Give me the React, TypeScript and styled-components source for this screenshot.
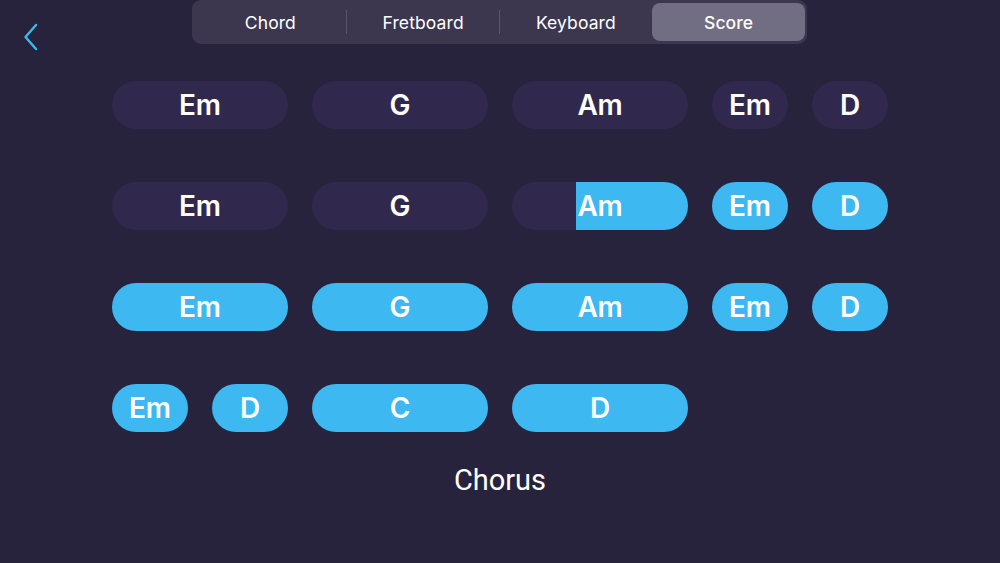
import React from "react";
import styled, { createGlobalStyle } from "styled-components";

const Global = createGlobalStyle`
  html, body { margin: 0; padding: 0; background: #28233d; }
  body { font-family: Inter, "Liberation Sans", Arial, sans-serif; }
  * { box-sizing: border-box; }
`;

const Screen = styled.div`
  width: 1000px;
  height: 563px;
  background: #28233d;
  position: relative;
  overflow: hidden;
  display: flex;
  flex-direction: column;
  align-items: center;
`;

const BackButton = styled.button`
  position: absolute;
  left: 18px;
  top: 20px;
  width: 26px;
  height: 34px;
  padding: 0;
  border: 0;
  background: transparent;
  display: flex;
  align-items: center;
  justify-content: center;
`;

const Segmented = styled.div`
  width: 615px;
  height: 44px;
  background: #3c374f;
  border-radius: 9px;
  padding: 3px 2px;
  display: grid;
  grid-template-columns: repeat(4, 1fr);
  margin-left: -1px;
`;

const Segment = styled.div<{ $active?: boolean; $sep?: boolean }>`
  position: relative;
  display: flex;
  align-items: center;
  justify-content: center;
  padding-top: 1px;
  border-radius: 8px;
  background: ${(p) => (p.$active ? "#716d82" : "transparent")};
  color: #ffffff;
  font-size: 17.5px;
  font-weight: ${(p) => (p.$active ? 500 : 400)};
  letter-spacing: 0.1px;
  &::before {
    content: "";
    display: ${(p) => (p.$sep ? "block" : "none")};
    position: absolute;
    left: -1px;
    top: 7px;
    bottom: 7px;
    width: 1px;
    background: #59546b;
  }
`;

const Grid = styled.div`
  margin-top: 37px;
  width: 776px;
  display: grid;
  grid-template-columns: repeat(8, 76px);
  column-gap: 24px;
  row-gap: 53px;
`;

const Pill = styled.div<{ $span: number; $on?: boolean }>`
  grid-column: span ${(p) => p.$span};
  height: 48px;
  border-radius: 24px;
  background: ${(p) => (p.$on ? "#3db8f0" : "#30294d")};
  position: relative;
  overflow: hidden;
  display: flex;
  align-items: center;
  justify-content: center;
`;

const Progress = styled.div`
  position: absolute;
  top: 0;
  bottom: 0;
  right: 0;
  background: #3db8f0;
`;

const PillLabel = styled.span`
  position: relative;
  color: #ffffff;
  font-size: 28px;
  font-weight: 600;
  letter-spacing: -0.2px;
`;

const Section = styled.div`
  margin-top: 31px;
  color: #ffffff;
  font-size: 29px;
  font-weight: 400;
  font-family: Roboto, "Liberation Sans", Arial, sans-serif;
`;

type Chord = { name: string; span: number; on?: boolean; progress?: number };

const rows: Chord[][] = [
  [
    { name: "Em", span: 2 },
    { name: "G", span: 2 },
    { name: "Am", span: 2 },
    { name: "Em", span: 1 },
    { name: "D", span: 1 },
  ],
  [
    { name: "Em", span: 2 },
    { name: "G", span: 2 },
    { name: "Am", span: 2, progress: 112 / 176 },
    { name: "Em", span: 1, on: true },
    { name: "D", span: 1, on: true },
  ],
  [
    { name: "Em", span: 2, on: true },
    { name: "G", span: 2, on: true },
    { name: "Am", span: 2, on: true },
    { name: "Em", span: 1, on: true },
    { name: "D", span: 1, on: true },
  ],
  [
    { name: "Em", span: 1, on: true },
    { name: "D", span: 1, on: true },
    { name: "C", span: 2, on: true },
    { name: "D", span: 2, on: true },
  ],
];

const tabs = ["Chord", "Fretboard", "Keyboard", "Score"];

export default function App() {
  return (
    <>
      <Global />
      <Screen>
        <BackButton aria-label="Back">
          <svg width="16" height="28" viewBox="0 0 16 28" fill="none">
            <path d="M13 2 L2.5 14 L13 26" stroke="#3db8f0" strokeWidth="2.4" strokeLinecap="round" strokeLinejoin="round" />
          </svg>
        </BackButton>
        <Segmented>
          {tabs.map((t, i) => (
            <Segment key={t} $active={t === "Score"} $sep={i > 0 && i < 3}>
              {t}
            </Segment>
          ))}
        </Segmented>
        <Grid>
          {rows.map((row, ri) =>
            row.map((c, ci) => (
              <Pill key={`${ri}-${ci}`} $span={c.span} $on={c.on}>
                {c.progress !== undefined && (
                  <Progress style={{ width: `${c.progress * 100}%` }} />
                )}
                <PillLabel>{c.name}</PillLabel>
              </Pill>
            ))
          )}
        </Grid>
        <Section>Chorus</Section>
      </Screen>
    </>
  );
}
